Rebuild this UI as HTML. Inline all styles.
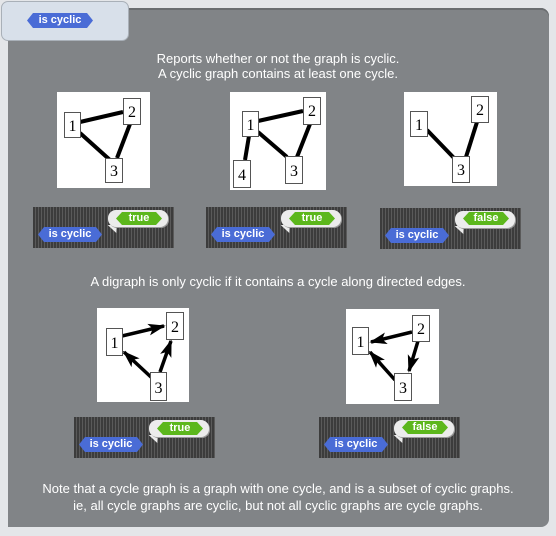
<!DOCTYPE html>
<html><head><style>
body{margin:0;width:556px;height:536px;background:#e4e6e9;position:relative;overflow:hidden;font-family:"Liberation Sans",sans-serif}
.panel{position:absolute;left:8px;top:8px;width:541px;height:519px;background:#818487;border-radius:0 8px 8px 0;box-shadow:inset 0 2px 0 #6a6d70}
.tab{position:absolute;left:1px;top:1px;width:126px;height:38px;background:#d8e0ea;border:1px solid #a9b0b8;border-radius:7px}
.t{position:absolute;left:0;width:556px;text-align:center;color:#fff;font-size:13px;line-height:15px}
.img{position:absolute;background:#fff}
.strip{position:absolute;height:41px;width:141px;background:repeating-linear-gradient(90deg,#3c3c3c 0 2px,#5a5a5a 2px 3px)}
.blk{position:absolute;height:15px;background:#4a6cd6;color:#fff;font-weight:bold;font-size:11px;line-height:15px;text-align:center;clip-path:polygon(6px 0,calc(100% - 6px) 0,100% 50%,calc(100% - 6px) 100%,6px 100%,0 50%)}
.bub{position:absolute;width:60px;height:17px;background:#ececec;border-radius:8px;box-shadow:1px 1px 0 #999}
.tail{position:absolute;width:0;height:0;border-left:4px solid transparent;border-right:5px solid transparent;border-top:8px solid #ececec;transform:skewX(30deg)}
.grn{position:absolute;height:13px;background:#5cb71c;color:#fff;font-weight:bold;font-size:11px;line-height:13px;text-align:center;clip-path:polygon(6px 0,calc(100% - 6px) 0,100% 50%,calc(100% - 6px) 100%,6px 100%,0 50%)}
svg{position:absolute;left:0;top:0}
</style></head><body>
<div class="panel"></div>
<div class="tab"></div>
<div class="blk" style="left:27px;top:13px;width:66px">is cyclic</div>

<div class="t" style="top:51px">Reports whether or not the graph is cyclic.</div>
<div class="t" style="top:66px">A cyclic graph contains at least one cycle.</div>
<div class="t" style="top:274px">A digraph is only cyclic if it contains a cycle along directed edges.</div>
<div class="t" style="top:481px">Note that a cycle graph is a graph with one cycle, and is a subset of cyclic graphs.</div>
<div class="t" style="top:498px">ie, all cycle graphs are cyclic, but not all cyclic graphs are cycle graphs.</div>

<div class="img" style="left:57px;top:92px;width:93px;height:96px"></div>
<div class="img" style="left:230px;top:92px;width:96px;height:98px"></div>
<div class="img" style="left:404px;top:92px;width:93px;height:94px"></div>
<div class="img" style="left:97px;top:308px;width:92px;height:94px"></div>
<div class="img" style="left:346px;top:309px;width:93px;height:95px"></div>

<svg width="556" height="536" viewBox="0 0 556 536" font-family="Liberation Serif,serif" font-size="16">
<defs><marker id="a" markerWidth="5" markerHeight="4" refX="4.5" refY="2" orient="auto" markerUnits="strokeWidth"><path d="M0,0.3 L5,2 L0,3.7 L1.2,2z" fill="#000"/></marker></defs>
<g stroke="#000" stroke-width="4">
<line x1="80" y1="122" x2="123" y2="112"/><line x1="80" y1="133" x2="110" y2="160"/><line x1="130" y1="124" x2="117" y2="158"/>
<line x1="258" y1="121" x2="303" y2="111"/><line x1="258" y1="132" x2="287" y2="157"/><line x1="310" y1="124" x2="297" y2="157"/><line x1="249" y1="136" x2="245" y2="160"/>
<line x1="427" y1="130" x2="454" y2="158"/><line x1="477" y1="122" x2="466" y2="157"/>
</g>
<g stroke="#000" stroke-width="3.5" marker-end="url(#a)">
<line x1="122" y1="336" x2="164" y2="326"/><line x1="160" y1="372" x2="171" y2="341"/><line x1="152" y1="378" x2="124" y2="352"/>
<line x1="412" y1="332" x2="371" y2="342"/><line x1="418" y1="341" x2="409" y2="371"/><line x1="395" y1="380" x2="370" y2="352"/>
</g>
<g fill="#fff" stroke="#555" stroke-width="1">
<rect x="64.5" y="112.5" width="16" height="25"/><rect x="123.5" y="98.5" width="17" height="26"/><rect x="105.5" y="158.5" width="17" height="24"/>
<rect x="242.5" y="111.5" width="16" height="25"/><rect x="303.5" y="97.5" width="17" height="27"/><rect x="285.5" y="156.5" width="17" height="27"/><rect x="233.5" y="160.5" width="17" height="27"/>
<rect x="410.5" y="111.5" width="17" height="25"/><rect x="471.5" y="96.5" width="17" height="26"/><rect x="452.5" y="156.5" width="17" height="26"/>
<rect x="106.5" y="328.5" width="16" height="27"/><rect x="166.5" y="312.5" width="17" height="27"/><rect x="150.5" y="372.5" width="16" height="28"/>
<rect x="352.5" y="327.5" width="16" height="27"/><rect x="412.5" y="315.5" width="17" height="26"/><rect x="394.5" y="373.5" width="17" height="27"/>
</g>
<g fill="#000" text-anchor="middle">
<text x="72.5" y="131">1</text><text x="132" y="117">2</text><text x="114" y="176">3</text>
<text x="250.5" y="130">1</text><text x="312" y="116">2</text><text x="294" y="176">3</text><text x="242" y="180">4</text>
<text x="419" y="130">1</text><text x="480" y="115">2</text><text x="461" y="175">3</text>
<text x="114.5" y="348">1</text><text x="175" y="332">2</text><text x="158.5" y="393">3</text>
<text x="360.5" y="347">1</text><text x="421" y="334">2</text><text x="403" y="393">3</text>
</g>
</svg>

<div class="strip" style="left:33px;top:207px"></div>
<div class="blk" style="left:38px;top:227px;width:64px">is cyclic</div>
<div class="tail" style="left:110px;top:225px"></div>
<div class="bub" style="left:108px;top:210px"></div>
<div class="grn" style="left:116px;top:212px;width:46px">true</div>

<div class="strip" style="left:206px;top:207px"></div>
<div class="blk" style="left:211px;top:227px;width:64px">is cyclic</div>
<div class="tail" style="left:283px;top:225px"></div>
<div class="bub" style="left:281px;top:210px"></div>
<div class="grn" style="left:289px;top:212px;width:46px">true</div>

<div class="strip" style="left:380px;top:208px"></div>
<div class="blk" style="left:385px;top:228px;width:64px">is cyclic</div>
<div class="tail" style="left:457px;top:226px"></div>
<div class="bub" style="left:455px;top:211px"></div>
<div class="grn" style="left:463px;top:212px;width:46px">false</div>

<div class="strip" style="left:74px;top:417px"></div>
<div class="blk" style="left:79px;top:437px;width:64px">is cyclic</div>
<div class="tail" style="left:151px;top:435px"></div>
<div class="bub" style="left:149px;top:420px"></div>
<div class="grn" style="left:157px;top:422px;width:46px">true</div>

<div class="strip" style="left:319px;top:417px"></div>
<div class="blk" style="left:324px;top:437px;width:64px">is cyclic</div>
<div class="tail" style="left:396px;top:435px"></div>
<div class="bub" style="left:394px;top:420px"></div>
<div class="grn" style="left:402px;top:421px;width:46px">false</div>
</body></html>
